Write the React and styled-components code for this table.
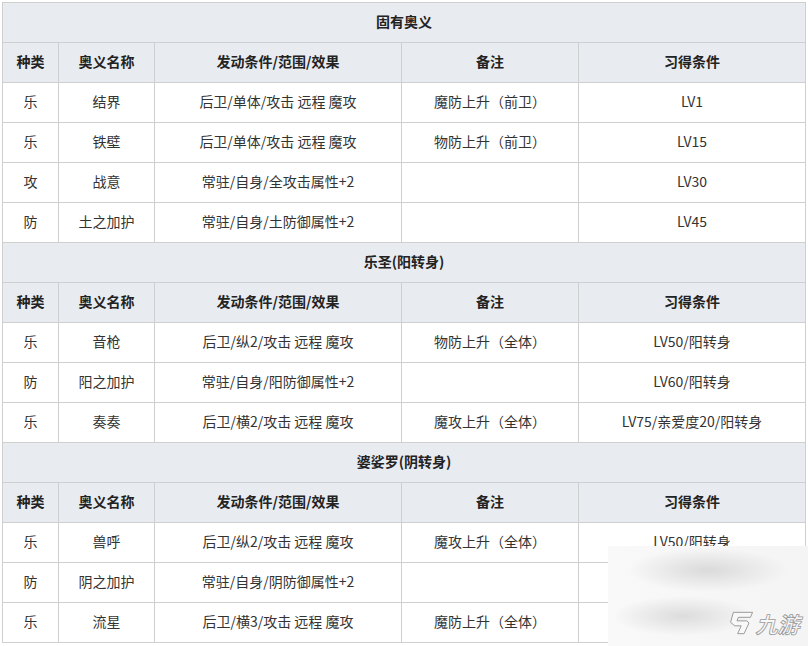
import React from "react";
import styled, { createGlobalStyle } from "styled-components";

const Global = createGlobalStyle`
  html, body { margin: 0; padding: 0; background: #fff; }
  body { font-family: "Noto Sans CJK SC", "Noto Sans", sans-serif; color: #333; }
`;

const Page = styled.div`
  position: relative;
  width: 808px;
  height: 646px;
  padding: 2px 0 0 2px;
  box-sizing: border-box;
  overflow: hidden;
`;

const Table = styled.table`
  border-collapse: collapse;
  table-layout: fixed;
  width: 803px;
  font-size: 14px;
`;

const Cell = styled.td`
  border: 1px solid #cfcfcf;
  height: 36px;
  padding: 0 0 3px 0;
  text-align: center;
  vertical-align: middle;
  line-height: 20px;
  color: #333;
  white-space: nowrap;
`;

const HeadCell = styled(Cell).attrs({ as: "th" })`
  background: #e8ebf0;
  font-weight: bold;
  color: #222;
`;

const Watermark = styled.div`
  position: absolute;
  left: 608px;
  top: 546px;
  width: 200px;
  height: 100px;
  box-sizing: border-box;
  padding: 0 6px 10px 0;
  display: flex;
  justify-content: flex-end;
  align-items: flex-end;
  background:
    radial-gradient(ellipse 80px 22px at 100px 24px, #dadada 0%, rgba(218,218,218,0) 100%),
    radial-gradient(ellipse 70px 20px at 75px 70px, #dcdcdc 0%, rgba(220,220,220,0) 100%),
    linear-gradient(90deg, #f9f9f9, #f4f4f4);
`;

const Logo = styled.div`
  display: flex;
  align-items: center;
  gap: 4px;
`;

const LogoText = styled.span`
  font-family: "Noto Sans CJK SC", sans-serif;
  font-size: 22px;
  font-weight: bold;
  display: inline-block;
  transform: skewX(-14deg);
  color: #f8f8f8;
  -webkit-text-stroke: 0.8px #9a9a9a;
  letter-spacing: 0;
  line-height: 26px;
  white-space: nowrap;
`;

const cols = [56, 96, 247, 177, 227];
const header = ["种类", "奥义名称", "发动条件/范围/效果", "备注", "习得条件"];

const sections = [
  {
    title: "固有奥义",
    rows: [
      ["乐", "结界", "后卫/单体/攻击 远程 魔攻", "魔防上升（前卫）", "LV1"],
      ["乐", "铁壁", "后卫/单体/攻击 远程 魔攻", "物防上升（前卫）", "LV15"],
      ["攻", "战意", "常驻/自身/全攻击属性+2", "", "LV30"],
      ["防", "土之加护", "常驻/自身/土防御属性+2", "", "LV45"],
    ],
  },
  {
    title: "乐圣(阳转身)",
    rows: [
      ["乐", "音枪", "后卫/纵2/攻击 远程 魔攻", "物防上升（全体）", "LV50/阳转身"],
      ["防", "阳之加护", "常驻/自身/阳防御属性+2", "", "LV60/阳转身"],
      ["乐", "奏奏", "后卫/横2/攻击 远程 魔攻", "魔攻上升（全体）", "LV75/亲爱度20/阳转身"],
    ],
  },
  {
    title: "婆娑罗(阴转身)",
    rows: [
      ["乐", "兽呼", "后卫/纵2/攻击 远程 魔攻", "魔攻上升（全体）", "LV50/阳转身"],
      ["防", "阴之加护", "常驻/自身/阴防御属性+2", "", "LV60/阴转身"],
      ["乐", "流星", "后卫/横3/攻击 远程 魔攻", "魔防上升（全体）", "LV75/亲爱度20/阴转身"],
    ],
  },
];

export default function App() {
  return (
    <Page>
      <Global />
      <Table>
        <colgroup>
          {cols.map((w, i) => (
            <col key={i} style={{ width: w }} />
          ))}
        </colgroup>
        <tbody>
          {sections.map((s) => (
            <React.Fragment key={s.title}>
              <tr>
                <HeadCell colSpan={5}>{s.title}</HeadCell>
              </tr>
              <tr>
                {header.map((h) => (
                  <HeadCell key={h}>{h}</HeadCell>
                ))}
              </tr>
              {s.rows.map((r, i) => (
                <tr key={i}>
                  {r.map((c, j) => (
                    <Cell key={j}>{c}</Cell>
                  ))}
                </tr>
              ))}
            </React.Fragment>
          ))}
        </tbody>
      </Table>
      <Watermark>
        <Logo>
          <svg width="27" height="26" viewBox="0 0 38 34">
            <path
              d="M9 2 L36 2 L33 9 L16 9 L14 14 L28 14 L31 17 L24 32 L15 32 L20 21 L11 21 L5 16 Z"
              fill="#f8f8f8"
              stroke="#9a9a9a"
              strokeWidth="1.4"
              strokeLinejoin="round"
            />
          </svg>
          <LogoText>九游</LogoText>
        </Logo>
      </Watermark>
    </Page>
  );
}
